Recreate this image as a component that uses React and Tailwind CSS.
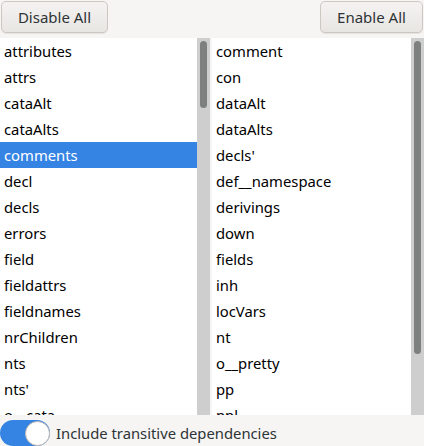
const left = ['attributes', 'attrs', 'cataAlt', 'cataAlts', 'comments', 'decl', 'decls', 'errors', 'field', 'fieldattrs', 'fieldnames', 'nrChildren', 'nts', "nts'", 'o__cata']
const right = ['comment', 'con', 'dataAlt', 'dataAlts', "decls'", 'def__namespace', 'derivings', 'down', 'fields', 'inh', 'locVars', 'nt', 'o__pretty', 'pp', "ppl"]

function List({ items, selected, thumbH, width }) {
  return (
    <div className={`flex h-full ${width}`}>
      <div className="flex-1 bg-white overflow-hidden">
        {items.map(it => (
          <div
            key={it}
            className={`h-[26px] leading-[26px] px-[4px] whitespace-nowrap ${it === selected ? 'bg-[#3584e4] text-white' : 'text-black'}`}
          >
            {it}
          </div>
        ))}
      </div>
      <div className="w-[13px] bg-[#cecece] flex justify-center pt-[3px]">
        <div className={`w-[7px] rounded-full bg-[#7e8080] ${thumbH}`} />
      </div>
    </div>
  )
}

export default function App() {
  return (
    <div className="w-[424px] h-[446px] bg-[#f6f5f4] flex flex-col overflow-hidden text-[14.8px] text-[#2e3436]" style={{ fontFamily: '"Noto Sans", "Open Sans", sans-serif' }}>
      <div className="flex justify-between px-[1px] pt-[1px] h-[38px]">
        <button className="h-[32px] w-[107px] rounded-[5px] border border-[#cdc7c2] bg-gradient-to-b from-[#f4f3f2] to-[#e8e6e3] text-[15px] text-[#2e3436] shadow-[0_1px_0_rgba(0,0,0,0.07)]">
          Disable All
        </button>
        <button className="h-[32px] w-[103px] rounded-[5px] border border-[#cdc7c2] bg-gradient-to-b from-[#f4f3f2] to-[#e8e6e3] text-[15px] text-[#2e3436] shadow-[0_1px_0_rgba(0,0,0,0.07)]">
          Enable All
        </button>
      </div>
      <div className="flex h-[377px] gap-[2px]">
        <List items={left} selected="comments" thumbH="h-[67px]" width="w-[210px]" />
        <List items={right} thumbH="h-[313px]" width="w-[212px]" />
      </div>
      <div className="flex items-center gap-[6px] pt-[5px]">
        <div className="w-[50px] h-[26px] rounded-full bg-[#3584e4] flex justify-end items-center">
          <div className="w-[25px] h-[25px] rounded-full bg-white border border-[#bfb8b1]" />
        </div>
        <span>Include transitive dependencies</span>
      </div>
    </div>
  )
}
